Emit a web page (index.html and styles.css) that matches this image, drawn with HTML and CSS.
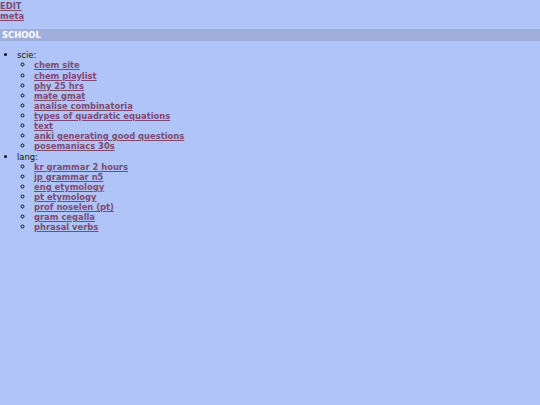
FILE: index.html
```html
<!DOCTYPE html>
<html>
<head>
<meta charset="utf-8">
<link rel="stylesheet" href="styles.css">
</head>
<body>
<div class="top">
  <a href="#">EDIT</a>
  <a href="#">meta</a>
</div>
<div class="section">SCHOOL</div>
<ul class="outer">
  <li>scie:
    <ul class="inner">
      <li><a href="#">chem site</a></li>
      <li><a href="#">chem playlist</a></li>
      <li><a href="#">phy 25 hrs</a></li>
      <li><a href="#">mate gmat</a></li>
      <li><a href="#">analise combinatoria</a></li>
      <li><a href="#">types of quadratic equations</a></li>
      <li><a href="#">text</a></li>
      <li><a href="#">anki generating good questions</a></li>
      <li><a href="#">posemaniacs 30s</a></li>
    </ul>
  </li>
  <li>lang:
    <ul class="inner">
      <li><a href="#">kr grammar 2 hours</a></li>
      <li><a href="#">jp grammar n5</a></li>
      <li><a href="#">eng etymology</a></li>
      <li><a href="#">pt etymology</a></li>
      <li><a href="#">prof noselen (pt)</a></li>
      <li><a href="#">gram cegalla</a></li>
      <li><a href="#">phrasal verbs</a></li>
    </ul>
  </li>
</ul>
</body>
</html>
```
FILE: styles.css
```css
html, body {
  margin: 0;
  padding: 0;
  background: #b0c4f8;
}
body {
  font-family: "DejaVu Sans Condensed", "DejaVu Sans", Verdana, sans-serif;
  font-size: 9.3px;
  line-height: 10.12px;
  color: #111;
}
a {
  color: #7e4a70;
  font-weight: bold;
  text-decoration: underline;
}
.top {
  display: flex;
  flex-direction: column;
  align-items: flex-start;
  padding-top: 1px;
  padding-bottom: 8px;
}
.section {
  background: #a0aedc;
  color: #fff;
  font-weight: bold;
  padding: 1px 2px;
  line-height: 10px;
}
.outer {
  margin: 9px 0 0 0;
  padding-left: 17px;
  list-style: disc;
}
.inner {
  margin: 0;
  padding-left: 17px;
  list-style: circle;
}
```
